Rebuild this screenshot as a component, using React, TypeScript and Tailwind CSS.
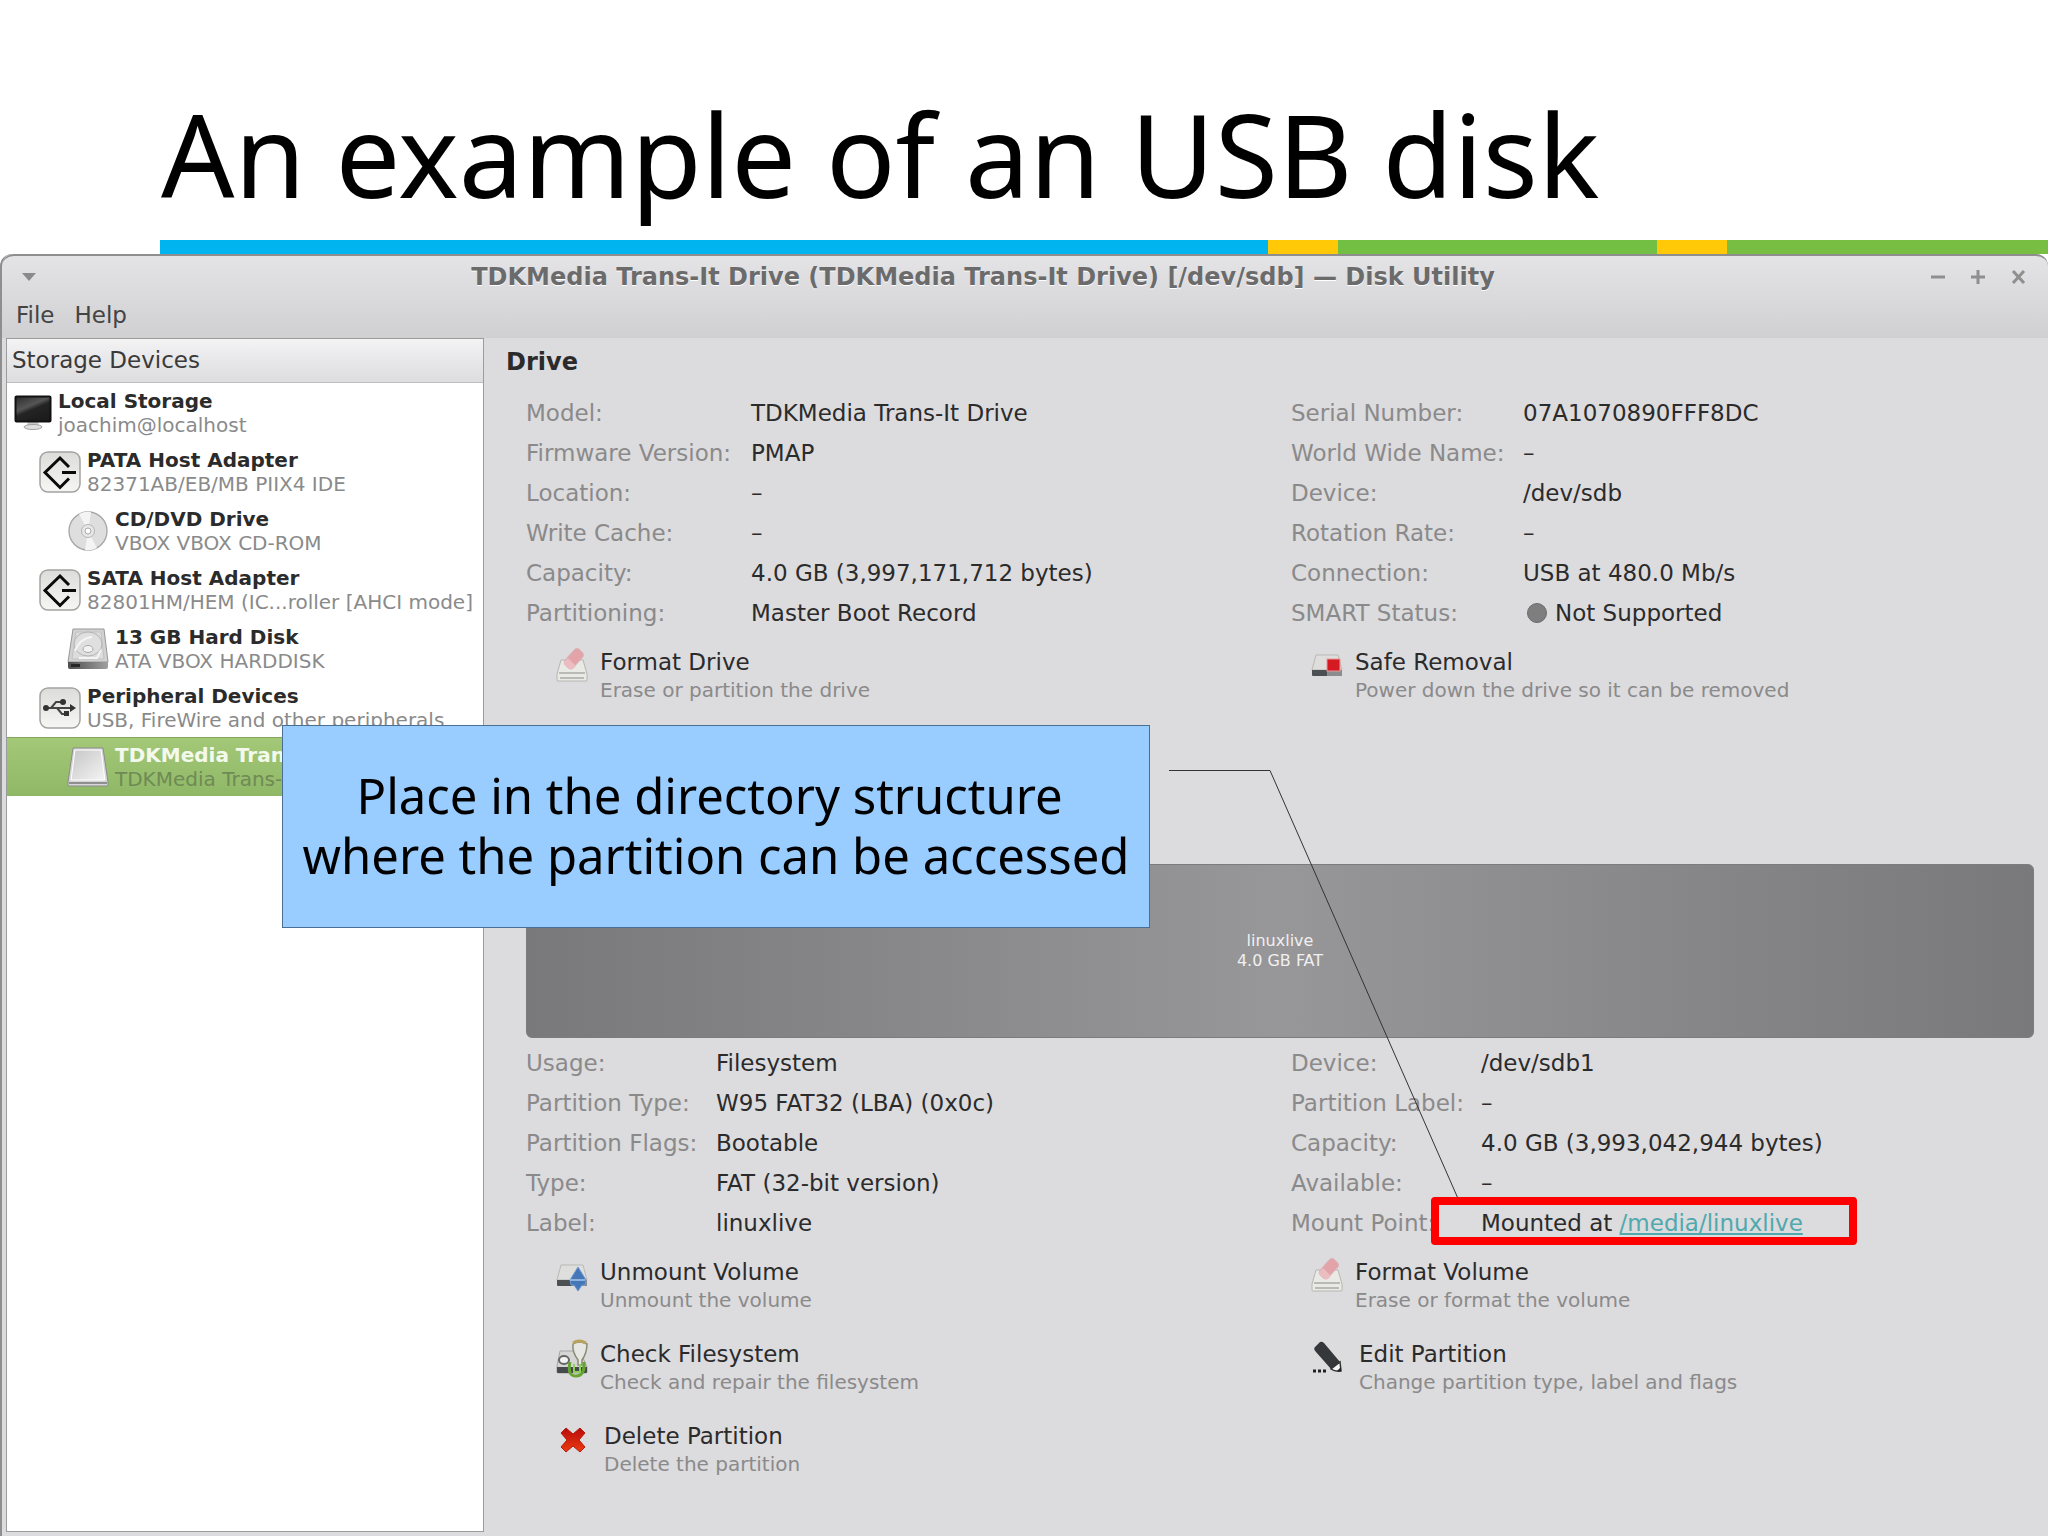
import type { ReactNode } from "react";

type Device = { name: string; detail: string; icon: ReactNode; indent: string; selected?: boolean };
type Field = { label: string; value: ReactNode };

function AdapterIcon() {
  return (
    <svg viewBox="0 0 42 42" className="h-[42px] w-[42px] shrink-0">
      <defs>
        <linearGradient id="tile" x1="0" y1="0" x2="0" y2="1">
          <stop offset="0" stopColor="#dcdcda" />
          <stop offset="1" stopColor="#f6f6f5" />
        </linearGradient>
      </defs>
      <rect x="1" y="1" width="40" height="40" rx="8" fill="url(#tile)" stroke="#a3a3a1" strokeWidth="1.5" />
      <path d="M30 16 21 7 6 21.500l15 15 9-9M23 21.500h14" fill="none" stroke="#0a0a0a" strokeWidth="3" />
    </svg>
  );
}

function UsbIcon() {
  return (
    <svg viewBox="0 0 42 42" className="h-[42px] w-[42px] shrink-0">
      <rect x="1" y="1" width="40" height="40" rx="8" fill="url(#tile)" stroke="#a3a3a1" strokeWidth="1.5" />
      <path d="M7 21h25M12 21l5-6h6M18 21l5 6h4" fill="none" stroke="#444" strokeWidth="2" />
      <path d="m31 17 6 4-6 4z" fill="#333" />
      <circle cx="7" cy="21" r="3" fill="#333" />
      <circle cx="24" cy="15" r="3" fill="#333" />
      <rect x="25" y="24" width="5" height="5" fill="#333" />
    </svg>
  );
}

function MonitorIcon() {
  return (
    <svg viewBox="0 0 38 36" className="h-[36px] w-[38px] shrink-0">
      <defs>
        <linearGradient id="screen" x1="0" y1="0" x2="0.6" y2="1">
          <stop offset="0" stopColor="#2a2a2a" />
          <stop offset="0.45" stopColor="#565656" />
          <stop offset="0.6" stopColor="#242424" />
          <stop offset="1" stopColor="#1c1c1c" />
        </linearGradient>
      </defs>
      <path d="M14 26h10l1 5H13z" fill="#c9c9c9" />
      <ellipse cx="19" cy="32" rx="9" ry="2.5" fill="#dedede" stroke="#a0a0a0" />
      <rect x="1.5" y="1.5" width="35" height="25" rx="1" fill="url(#screen)" stroke="#111" strokeWidth="2" />
    </svg>
  );
}

function DiscIcon() {
  return (
    <svg viewBox="0 0 42 42" className="h-[42px] w-[42px] shrink-0">
      <circle cx="21" cy="21" r="19" fill="#dedede" stroke="#a5a5a5" strokeWidth="1.3" />
      <path d="M21 21 12 4a19 19 0 0 1 12-2zM21 21l9 17a19 19 0 0 1-12 2z" fill="#f4f4f4" />
      <circle cx="21" cy="21" r="6.5" fill="#e8e8e8" stroke="#b4b4b4" />
      <circle cx="21" cy="21" r="3" fill="#fff" stroke="#a8a8a8" />
    </svg>
  );
}

function HardDiskIcon() {
  return (
    <svg viewBox="0 0 42 42" className="h-[42px] w-[42px] shrink-0">
      <defs>
        <linearGradient id="edge" x1="0" y1="0" x2="1" y2="0">
          <stop offset="0" stopColor="#4d4d4d" />
          <stop offset="1" stopColor="#a0a0a0" />
        </linearGradient>
      </defs>
      <path d="M6 1h31l4 33H1z" fill="#d2d2d2" stroke="#979797" />
      <path d="M1 34h40v5q0 2-2 2H3q-2 0-2-2z" fill="url(#edge)" />
      <path d="M4 36h9v3H4z" fill="#262626" />
      <path d="M9 4h25l3 27H5z" fill="#dcdcdc" stroke="#c2c2c2" />
      <ellipse cx="21" cy="16" rx="14" ry="12" fill="#dfdfdf" stroke="#b4b4b4" />
      <path d="M8 23q5-13 17-14M34 22l-4 8H12" fill="none" stroke="#f4f4f4" strokeWidth="2" />
      <ellipse cx="21" cy="21" rx="5" ry="3.5" fill="#f2f2f2" stroke="#aaa" />
    </svg>
  );
}

function RemovableIcon() {
  return (
    <svg viewBox="0 0 42 42" className="h-[42px] w-[42px] shrink-0">
      <defs>
        <linearGradient id="lid" x1="0" y1="0" x2="1" y2="1">
          <stop offset="0" stopColor="#c6c6c6" />
          <stop offset="1" stopColor="#f4f4f4" />
        </linearGradient>
      </defs>
      <path d="M6 2h30l5 34v3q0 1-1 1H2q-1 0-1-1v-3z" fill="#d6d6d6" stroke="#8b8b8b" />
      <path d="M8 4h26l4 30H4z" fill="url(#lid)" stroke="#fff" />
      <path d="M2 37h38" stroke="#777" strokeWidth="1.5" />
    </svg>
  );
}

function DriveBody() {
  return (
    <>
      <path d="M5 8h22l4 15H1z" fill="#dededc" stroke="#b9b9b6" />
      <path d="M1 23h30v5q0 1-1 1H2q-1 0-1-1z" fill="#4c5053" />
      <path d="M16 23h15v5q0 1-1 1H16z" fill="#8b8d8e" />
    </>
  );
}

function EraseIcon() {
  return (
    <svg viewBox="0 0 32 36" className="h-[36px] w-[32px] shrink-0">
      <path d="M5 13h22l4 14v6q0 1-1 1H2q-1 0-1-1v-6z" fill="#e9e9e6" stroke="#b6b6b2" />
      <path d="M3 26h26M4 31h24" stroke="#a9a9a5" strokeWidth="1.5" />
      <path d="M18 3q2-3 5-1l4 4q1 2 0 4L17 21q-2 2-5 0l-3-3q-2-2 0-5z" fill="#e2a3a9" stroke="#d8b9bb" />
      <path d="m12 11 8 8-3 3q-3 1-5-1l-3-3q-2-2 0-4z" fill="#ebbdc1" />
    </svg>
  );
}

function SafeRemovalIcon() {
  return (
    <svg viewBox="0 0 32 36" className="h-[36px] w-[32px] shrink-0">
      <DriveBody />
      <rect x="16" y="12" width="13" height="12" fill="#d61a22" stroke="#e59a9a" />
    </svg>
  );
}

function UnmountIcon() {
  return (
    <svg viewBox="0 0 32 36" className="h-[36px] w-[32px] shrink-0">
      <DriveBody />
      <path d="m22 10 8 13-1 5h-3l-4 6-4-6h-3l-1-5z" fill="#4577b8" stroke="#6c97d0" />
      <path d="M14 23h15" stroke="#a9c5e8" strokeWidth="1.5" />
    </svg>
  );
}

function CheckIcon() {
  return (
    <svg viewBox="0 0 32 40" className="h-[40px] w-[32px] shrink-0">
      <path d="M4 12h20l7 16v5q0 1-1 1H2q-1 0-1-1v-6z" fill="#d5d5d3" stroke="#a5a5a2" />
      <path d="M1 28h30v5q0 1-1 1H2q-1 0-1-1z" fill="#464a4d" />
      <ellipse cx="8" cy="21" rx="5" ry="4" fill="#f3f3f3" stroke="#666" strokeWidth="2" />
      <path d="M17 5q6-4 14 0 0 9-5 16v5h-4v-5Q16 13 17 5z" fill="#e6e6e2" stroke="#8b8b76" strokeWidth="1.5" />
      <path d="M17 4q6-4 13 0" fill="none" stroke="#b9a45e" strokeWidth="3" />
      <path d="M14 23q-3 14 6 14t8-14" fill="none" stroke="#65a430" strokeWidth="3" />
      <path d="M18 25v8h6v-8" fill="none" stroke="#8fd05c" strokeWidth="2" />
    </svg>
  );
}

function EditIcon() {
  return (
    <svg viewBox="0 0 32 36" className="h-[36px] w-[32px] shrink-0">
      <path d="m4 8 5-5q2-1 4 1l16 19-9 7L5 13q-3-3-1-5z" fill="#35373a" />
      <path d="m29 23 1 9q-6 1-10-2z" fill="#f5f5f5" stroke="#333" strokeWidth="1.5" />
      <path d="m26 32 4 0v-4z" fill="#222" />
      <path d="M2 32h3M7 32h3M12 32h3" stroke="#222" strokeWidth="3" />
    </svg>
  );
}

function DeleteIcon() {
  return (
    <svg viewBox="0 0 32 36" className="h-[36px] w-[32px] shrink-0">
      <defs>
        <linearGradient id="cross" x1="0" y1="0" x2="0" y2="1">
          <stop offset="0" stopColor="#b80c0c" />
          <stop offset="1" stopColor="#ec3a10" />
        </linearGradient>
      </defs>
      <path d="m10 7 7 6 7-6 5 5-6 7 6 7-5 5-7-6-7 6-5-5 6-7-6-7z" fill="url(#cross)" stroke="#b81a0c" strokeLinejoin="round" />
    </svg>
  );
}

const devices: Device[] = [
  { name: "Local Storage", detail: "joachim@localhost", icon: <MonitorIcon />, indent: "pl-[7px]" },
  { name: "PATA Host Adapter", detail: "82371AB/EB/MB PIIX4 IDE", icon: <AdapterIcon />, indent: "pl-8" },
  { name: "CD/DVD Drive", detail: "VBOX VBOX CD-ROM", icon: <DiscIcon />, indent: "pl-[60px]" },
  { name: "SATA Host Adapter", detail: "82801HM/HEM (IC...roller [AHCI mode]", icon: <AdapterIcon />, indent: "pl-8" },
  { name: "13 GB Hard Disk", detail: "ATA VBOX HARDDISK", icon: <HardDiskIcon />, indent: "pl-[60px]" },
  { name: "Peripheral Devices", detail: "USB, FireWire and other peripherals", icon: <UsbIcon />, indent: "pl-8" },
  { name: "TDKMedia Tran", detail: "TDKMedia Trans-", icon: <RemovableIcon />, indent: "pl-[60px]", selected: true },
];

const driveLeft: Field[] = [
  { label: "Model:", value: "TDKMedia Trans-It Drive" },
  { label: "Firmware Version:", value: "PMAP" },
  { label: "Location:", value: "–" },
  { label: "Write Cache:", value: "–" },
  { label: "Capacity:", value: "4.0 GB (3,997,171,712 bytes)" },
  { label: "Partitioning:", value: "Master Boot Record" },
];

const driveRight: Field[] = [
  { label: "Serial Number:", value: "07A1070890FFF8DC" },
  { label: "World Wide Name:", value: "–" },
  { label: "Device:", value: "/dev/sdb" },
  { label: "Rotation Rate:", value: "–" },
  { label: "Connection:", value: "USB at 480.0 Mb/s" },
  {
    label: "SMART Status:",
    value: (
      <span className="flex items-center gap-2 pl-1">
        <span className="h-5 w-5 rounded-full border border-[#6c6c6c] bg-[#7e7e7e]" />
        Not Supported
      </span>
    ),
  },
];

const volumeLeft: Field[] = [
  { label: "Usage:", value: "Filesystem" },
  { label: "Partition Type:", value: "W95 FAT32 (LBA) (0x0c)" },
  { label: "Partition Flags:", value: "Bootable" },
  { label: "Type:", value: "FAT (32-bit version)" },
  { label: "Label:", value: "linuxlive" },
];

const volumeRight: Field[] = [
  { label: "Device:", value: "/dev/sdb1" },
  { label: "Partition Label:", value: "–" },
  { label: "Capacity:", value: "4.0 GB (3,993,042,944 bytes)" },
  { label: "Available:", value: "–" },
  {
    label: "Mount Point:",
    value: (
      <>
        Mounted at{" "}
        <a href="#media" className="text-[#4fa9ad] underline">
          /media/linuxlive
        </a>
        <span className="pointer-events-none absolute -top-1.5 -left-[50px] h-12 w-[426px] rounded-[4px] border-8 border-[#fe0000]" />
      </>
    ),
  },
];

function Fields({ items, labelWidth }: { items: Field[]; labelWidth: string }) {
  return (
    <dl className="text-[23px] leading-10">
      {items.map((item) => (
        <div key={item.label} className="flex whitespace-nowrap">
          <dt className={`${labelWidth} shrink-0 text-[#8a8a8b]`}>{item.label}</dt>
          <dd className="relative text-[#2b2b2c]">{item.value}</dd>
        </div>
      ))}
    </dl>
  );
}

function Action({ icon, title, detail, gap = "gap-3" }: { icon: ReactNode; title: string; detail: string; gap?: string }) {
  return (
    <button type="button" className={`flex items-start whitespace-nowrap text-left ${gap}`}>
      {icon}
      <span>
        <span className="block text-[23px] leading-[30px] text-[#2b2b2c]">{title}</span>
        <span className="block text-[20px] leading-[26px] text-[#8a8a8b]">{detail}</span>
      </span>
    </button>
  );
}

function Sidebar() {
  return (
    <aside className="mb-1 ml-1 flex w-[478px] shrink-0 flex-col border border-[#9c9c9c] bg-white">
      <h2 className="h-11 border-b border-[#bdbdbd] bg-linear-to-b from-[#f3f3f4] to-[#dddcde] px-[5px] text-[23px] leading-[42px] text-[#3a3a3b]">
        Storage Devices
      </h2>
      <ul>
        {devices.map((device) => (
          <li
            key={device.name}
            className={`flex h-[59px] items-center gap-1.5 whitespace-nowrap ${device.indent} ${
              device.selected ? "border-t border-[#83a95c] bg-linear-to-b from-[#a3c877] to-[#8fb866]" : ""
            }`}
          >
            {device.icon}
            <div className="text-[20px] leading-6">
              <p className={device.selected ? "font-bold text-[#f4f9ee]" : "font-bold text-[#2b2b2c]"}>{device.name}</p>
              <p className={device.selected ? "text-[#6f8a55]" : "text-[#8a8a8b]"}>{device.detail}</p>
            </div>
          </li>
        ))}
      </ul>
    </aside>
  );
}

function TitleBar() {
  return (
    <header className="h-[84px] rounded-t-xl border-t-2 border-[#8e8e8e] bg-linear-to-b from-[#e4e3e5] to-[#d0cfd1]">
      <div className="flex h-[42px] items-center pr-[22px] pl-5">
        <svg viewBox="0 0 14 8" className="h-2 w-3.5">
          <path d="M0 0h14L7 8z" fill="#8a8a8a" />
        </svg>
        <h2 className="flex-1 text-center text-2xl font-bold text-[#6c6b6c] [text-shadow:0_1px_0_white]">
          TDKMedia Trans-It Drive (TDKMedia Trans-It Drive) [/dev/sdb] — Disk Utility
        </h2>
        <svg viewBox="0 0 96 16" className="h-4 w-24 fill-none stroke-[#8f8f8f] stroke-3">
          <path d="M1 8h14M41 8h14M48 1v14M83 2l11 12M94 2 83 14" />
        </svg>
      </div>
      <nav className="flex gap-5 px-3.5 text-[23px] leading-[34px] text-[#444]">
        <button type="button">File</button>
        <button type="button">Help</button>
      </nav>
    </header>
  );
}

export default function App() {
  return (
    <div className="flex min-h-screen flex-col overflow-hidden bg-white font-['Noto_Sans',sans-serif]">
      <h1 className="h-60 pt-[72px] pl-[161px] text-[115px] leading-[164px] whitespace-nowrap text-black">An example of an USB disk</h1>
      <div className="ml-[160px] flex h-[14px]">
        <div className="w-[1108px] bg-[#00b5ef]" />
        <div className="w-[70px] bg-[#ffc907]" />
        <div className="w-[319px] bg-[#72bf44]" />
        <div className="w-[70px] bg-[#ffc907]" />
        <div className="flex-1 bg-[#77be43]" />
      </div>

      <main className="relative flex flex-1 flex-col rounded-t-xl border-l-2 border-[#8e8e8e] bg-[#dcdbdd] font-['DejaVu_Sans',sans-serif]">
        <TitleBar />
        <div className="flex flex-1">
          <Sidebar />
          <section className="min-w-0 flex-1 pr-[14px] pl-[22px]">
            <h3 className="pt-1 pb-[11px] text-2xl leading-10 font-bold text-[#2b2b2c]">Drive</h3>
            <div className="grid grid-cols-2 gap-x-[22px] pl-5">
              <div>
                <Fields items={driveLeft} labelWidth="w-[225px]" />
                <div className="pt-[14px] pl-[30px]">
                  <Action icon={<EraseIcon />} title="Format Drive" detail="Erase or partition the drive" />
                </div>
              </div>
              <div>
                <Fields items={driveRight} labelWidth="w-[232px]" />
                <div className="pt-[14px] pl-5">
                  <Action icon={<SafeRemovalIcon />} title="Safe Removal" detail="Power down the drive so it can be removed" />
                </div>
              </div>
            </div>

            <div className="mt-[161px] ml-5 flex h-[174px] flex-col items-center justify-center rounded-md border border-[#7c7b7d] bg-linear-to-r from-[#79787a] via-[#979698] to-[#79787a] text-base leading-5 text-[#f0f0f0]">
              <span>linuxlive</span>
              <span>4.0 GB FAT</span>
            </div>

            <div className="grid grid-cols-2 gap-x-[22px] pt-[5px] pl-5">
              <div>
                <Fields items={volumeLeft} labelWidth="w-[190px]" />
                <div className="flex flex-col gap-[26px] pt-[14px] pl-[30px]">
                  <Action icon={<UnmountIcon />} title="Unmount Volume" detail="Unmount the volume" />
                  <Action icon={<CheckIcon />} title="Check Filesystem" detail="Check and repair the filesystem" />
                  <Action icon={<DeleteIcon />} title="Delete Partition" detail="Delete the partition" gap="gap-4" />
                </div>
              </div>
              <div>
                <Fields items={volumeRight} labelWidth="w-[190px]" />
                <div className="flex flex-col gap-[26px] pt-[14px] pl-5">
                  <Action icon={<EraseIcon />} title="Format Volume" detail="Erase or format the volume" />
                  <Action icon={<EditIcon />} title="Edit Partition" detail="Change partition type, label and flags" gap="gap-4" />
                </div>
              </div>
            </div>
          </section>
        </div>

        {/* callout and its leader line, laid over the window */}
        <svg viewBox="0 0 300 440" className="pointer-events-none absolute top-[516px] left-[1167px] h-[440px] w-[300px]">
          <path d="M0 .5h101l188 428" fill="none" stroke="#333" />
        </svg>
        <p className="absolute top-[471px] left-[280px] flex h-[203px] w-[868px] items-center justify-center border border-[#4a6f95] bg-[#99ccff] pb-1 text-center font-['Noto_Sans',sans-serif] text-[49px] leading-[60px] text-black">
          Place in the directory structure&nbsp;
          <br />
          where the partition can be accessed
        </p>
      </main>
    </div>
  );
}
